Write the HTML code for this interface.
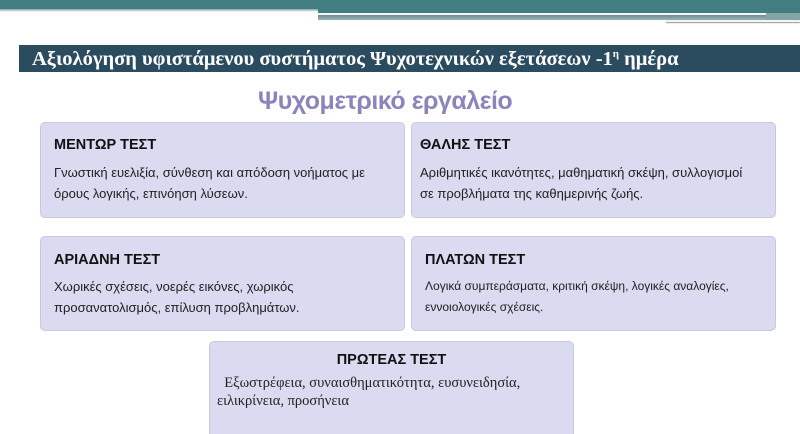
<!DOCTYPE html>
<html><head><meta charset="utf-8"><style>
html,body{margin:0;width:800px;height:434px;overflow:hidden}
body{background:#fff;position:relative;font-family:"Liberation Sans",sans-serif}
.a{position:absolute}
.box{position:absolute;background:#dadaf0;border:1px solid #c8c8e2;border-radius:5px;box-sizing:border-box;color:#222}
.box h3{margin:0;font-size:14.5px;font-weight:bold;color:#111}
.box p{margin:0;font-size:13px;line-height:21px}
</style></head><body>
<div class="a" style="left:0;top:0;width:800px;height:9px;background:#417d81"></div>
<div class="a" style="left:0;top:9px;width:800px;height:3px;background:linear-gradient(#8a9fa0,#fff)"></div>
<div class="a" style="left:318px;top:9px;width:482px;height:4px;background:#417d81"></div>
<div class="a" style="left:318px;top:13px;width:448px;height:2px;background:#f4f6f6"></div>
<div class="a" style="left:318px;top:15px;width:482px;height:5px;background:linear-gradient(#6e8f90,#9bb2b2)"></div>
<div class="a" style="left:766px;top:13px;width:34px;height:7px;background:#86a4a4"></div>
<div class="a" style="left:666px;top:20px;width:134px;height:2px;background:#f2f4f4;box-shadow:0 1px 1px #999"></div>
<div class="a" style="left:19px;top:45px;width:781px;height:27px;background:#2b4b5f;color:#fff;font-family:'Liberation Serif',serif;font-size:20.5px;font-weight:bold;line-height:28px;padding-left:13px;box-sizing:border-box;white-space:nowrap">Αξιολόγηση υφιστάμενου συστήματος Ψυχοτεχνικών εξετάσεων -1<sup style="font-size:11px;line-height:0">η</sup> ημέρα</div>
<div class="a" style="left:258px;top:87px;white-space:nowrap;font-size:25px;color:#8a85bd;font-weight:bold;letter-spacing:-0.5px;">Ψυχομετρικό εργαλείο</div>
<div class="box" style="left:40px;top:122px;width:365px;height:96px;padding:14px 0 0 13px"><h3>ΜΕΝΤΩΡ ΤΕΣΤ</h3><p style="margin-top:9px">Γνωστική ευελιξία, σύνθεση και απόδοση νοήματος με<br>όρους λογικής, επινόηση λύσεων.</p></div>
<div class="box" style="left:411px;top:122px;width:365px;height:96px;padding:14px 0 0 8px"><h3>ΘΑΛΗΣ ΤΕΣΤ</h3><p style="margin-top:9px;font-size:13px">Αριθμητικές ικανότητες, μαθηματική σκέψη, συλλογισμοί<br>σε προβλήματα της καθημερινής ζωής.</p></div>
<div class="box" style="left:40px;top:236px;width:365px;height:95px;padding:15px 0 0 13px"><h3>ΑΡΙΑΔΝΗ ΤΕΣΤ</h3><p style="margin-top:8px">Χωρικές σχέσεις, νοερές εικόνες, χωρικός<br>προσανατολισμός, επίλυση προβλημάτων.</p></div>
<div class="box" style="left:411px;top:236px;width:365px;height:95px;padding:15px 0 0 13px"><h3>ΠΛΑΤΩΝ ΤΕΣΤ</h3><p style="margin-top:8px;font-size:12px">Λογικά συμπεράσματα, κριτική σκέψη, λογικές αναλογίες,<br>εννοιολογικές σχέσεις.</p></div>
<div class="box" style="left:209px;top:341px;width:365px;height:110px;padding:10px 0 0 7px"><h3 style="text-align:center;padding-right:7px">ΠΡΩΤΕΑΣ ΤΕΣΤ</h3><p style="margin-top:6px;font-family:'Liberation Serif',serif;font-size:14.5px;line-height:18px">&nbsp;&nbsp;Εξωστρέφεια, συναισθηματικότητα, ευσυνειδησία,<br>ειλικρίνεια, προσήνεια</p></div>
</body></html>
